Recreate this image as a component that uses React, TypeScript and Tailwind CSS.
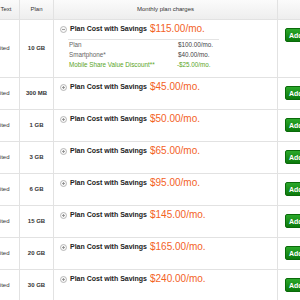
import React from "react";

const rows = [
  { plan: "300 MB", price: "$45.00/mo." },
  { plan: "1 GB", price: "$50.00/mo." },
  { plan: "3 GB", price: "$65.00/mo." },
  { plan: "6 GB", price: "$95.00/mo." },
  { plan: "15 GB", price: "$145.00/mo." },
  { plan: "20 GB", price: "$165.00/mo." },
  { plan: "30 GB", price: "$240.00/mo." },
];

function Toggle({ open }: { open: boolean }) {
  return (
    <svg width="7" height="7" viewBox="0 0 7 7" className="shrink-0">
      <circle cx="3.5" cy="3.5" r="3" fill="#f7f7f7" stroke="#a8a8a8" strokeWidth="0.8" />
      <line x1="2" y1="3.5" x2="5" y2="3.5" stroke="#888" strokeWidth="0.8" />
      {!open && <line x1="3.5" y1="2" x2="3.5" y2="5" stroke="#888" strokeWidth="0.8" />}
    </svg>
  );
}

function AddButton() {
  return (
    <div className="h-[14px] w-[30px] rounded-[2px] border border-[#0a6a0a] bg-gradient-to-b from-[#2aa82a] to-[#0b7a0b] flex items-center pl-[3px] text-[7px] font-bold text-white leading-none">
      Add
    </div>
  );
}

function Title({ open }: { open: boolean }) {
  return (
    <div className="flex items-center h-[10px]">
      <div className="w-[96px] pl-[6px] flex items-center gap-[3px]">
        <Toggle open={open} />
        <span className="text-[7px] font-bold text-[#222] leading-[10px] whitespace-nowrap">
          Plan Cost with Savings
        </span>
      </div>
      <span className="text-[10px] text-[#f3621f] leading-[10px] whitespace-nowrap">
        {open ? "$115.00/mo." : ""}
      </span>
    </div>
  );
}

export default function App() {
  return (
    <div className="w-[300px] h-[300px] overflow-hidden bg-white" style={{ fontFamily: "'Liberation Sans', Arial, sans-serif" }}>
      <div className="ml-[-25px] w-[420px]">
        {/* header */}
        <div className="flex h-[20px] border-b border-[#e2e2e2] bg-gradient-to-b from-[#fbfbfb] to-[#eeeeee] text-[6px] text-[#333]">
          <div className="w-[45px] border-r border-[#e2e2e2] flex items-center justify-center whitespace-nowrap">Talk &amp; Text</div>
          <div className="w-[34px] border-r border-[#e2e2e2] flex items-center justify-center">Plan</div>
          <div className="w-[224px] border-r border-[#e2e2e2] flex items-center justify-center">Monthly plan charges</div>
          <div className="flex-1" />
        </div>

        {/* first expanded row */}
        <div className="flex h-[58px] border-b border-[#e2e2e2]">
          <div className="w-[45px] border-r border-[#e2e2e2] flex items-center justify-center text-[6px] text-[#333]">Unlimited</div>
          <div className="w-[34px] border-r border-[#e2e2e2] flex items-center justify-center text-[6px] font-bold text-[#333] whitespace-nowrap">10 GB</div>
          <div className="w-[224px] border-r border-[#e2e2e2] pt-[4px]">
            <div className="flex items-center h-[10px]">
              <div className="w-[96px] pl-[6px] flex items-center gap-[3px]">
                <Toggle open={true} />
                <span className="text-[7px] font-bold text-[#222] leading-[10px] whitespace-nowrap">Plan Cost with Savings</span>
              </div>
              <span className="text-[10px] text-[#f3621f] leading-[10px] whitespace-nowrap">$115.00/mo.</span>
            </div>
            <div className="ml-[14px] w-[151px] mt-[5px] border-t border-[#e4e4e4] text-[6.3px] leading-[10px]">
              <div className="flex">
                <span className="w-[110px] pl-[1px] text-[#666]">Plan</span>
                <span className="text-[#444]">$100.00/mo.</span>
              </div>
              <div className="flex">
                <span className="w-[110px] pl-[1px] text-[#666]">Smartphone*</span>
                <span className="text-[#444]">$40.00/mo.</span>
              </div>
              <div className="flex">
                <span className="w-[109px] pl-[1px] text-[#5aa51e] whitespace-nowrap">Mobile Share Value Discount**</span>
                <span className="text-[#5aa51e]">-$25.00/mo.</span>
              </div>
            </div>
          </div>
          <div className="flex-1 pt-[8px] pl-[7px]">
            <AddButton />
          </div>
        </div>

        {rows.map((r) => (
          <div key={r.plan} className="flex h-[32px] border-b border-[#e2e2e2]">
            <div className="w-[45px] border-r border-[#e2e2e2] flex items-center justify-center text-[6px] text-[#333]">Unlimited</div>
            <div className="w-[34px] border-r border-[#e2e2e2] flex items-center justify-center text-[6px] font-bold text-[#333] whitespace-nowrap">{r.plan}</div>
            <div className="w-[224px] border-r border-[#e2e2e2] pt-[4px]">
              <div className="flex items-center h-[10px]">
                <div className="w-[96px] pl-[6px] flex items-center gap-[3px]">
                  <Toggle open={false} />
                  <span className="text-[7px] font-bold text-[#222] leading-[10px] whitespace-nowrap">Plan Cost with Savings</span>
                </div>
                <span className="text-[10px] text-[#f3621f] leading-[10px] whitespace-nowrap">{r.price}</span>
              </div>
            </div>
            <div className="flex-1 pt-[8px] pl-[7px]">
              <AddButton />
            </div>
          </div>
        ))}
      </div>
    </div>
  );
}
